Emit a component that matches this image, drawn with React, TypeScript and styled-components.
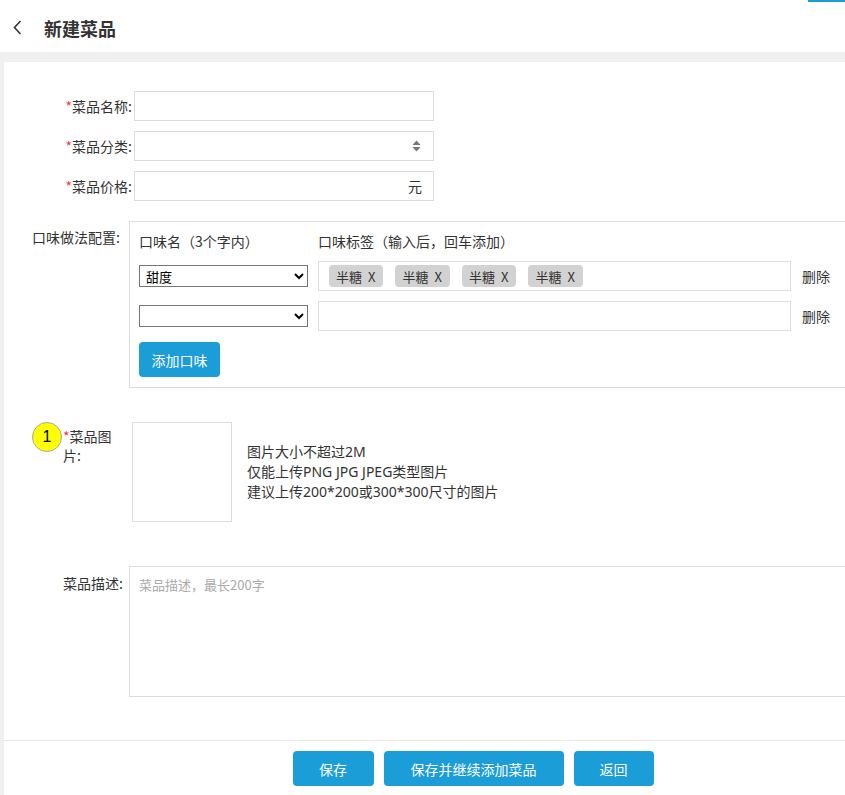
import React from "react";
import styled, { createGlobalStyle } from "styled-components";

const GlobalStyle = createGlobalStyle`
  html, body {
    margin: 0;
    padding: 0;
    background: #f0f0f0;
    overflow: hidden;
  }
  body {
    font-family: "Noto Sans", "Noto Sans CJK SC", sans-serif;
    color: #333;
    font-size: 14px;
  }
  * { box-sizing: border-box; }
`;

const Page = styled.div`
  width: 942px;
  min-height: 795px;
`;

const Header = styled.header`
  position: relative;
  height: 52px;
  background: #fff;
  display: flex;
  align-items: center;
  padding-left: 13px;
  padding-top: 3px;
`;

const TopAccent = styled.span`
  position: absolute;
  top: 0;
  left: 808px;
  width: 37px;
  height: 2px;
  background: #1b9dd8;
`;

const BackButton = styled.button`
  border: 0;
  background: none;
  padding: 0;
  margin-right: 22px;
  display: flex;
  align-items: center;
  cursor: pointer;
`;

const Title = styled.h1`
  margin: 0;
  font-size: 18px;
  font-weight: bold;
  color: #333;
  font-family: "Noto Sans CJK SC", sans-serif;
`;

const Main = styled.main`
  padding: 10px 0 0 4px;
`;

const Card = styled.div`
  width: 938px;
  background: #fff;
`;

const Form = styled.div`
  padding: 29px 0 43px;
`;

const Row = styled.div<{ $top?: number; $bottom?: number }>`
  display: flex;
  align-items: flex-start;
  margin-top: ${(p) => p.$top ?? 0}px;
  margin-bottom: ${(p) => p.$bottom ?? 0}px;
`;

const Label = styled.label<{ $width: number; $pt?: number; $lh?: number }>`
  width: ${(p) => p.$width}px;
  flex-shrink: 0;
  text-align: right;
  padding-top: ${(p) => p.$pt ?? 0}px;
  line-height: ${(p) => p.$lh ?? 30}px;
  font-size: 14px;
  color: #333;
  font-family: "Noto Sans CJK SC", sans-serif;
`;

const Star = styled.span`
  color: #f5364c;
`;

const FieldWrap = styled.div`
  position: relative;
  margin-left: 2px;
  width: 300px;
  height: 30px;
`;

const TextInput = styled.input`
  width: 100%;
  height: 100%;
  border: 1px solid #dcdcdc;
  padding: 0 10px;
  font-size: 14px;
  outline: none;
  appearance: none;
  background: #fff;
  font-family: inherit;
`;

const PlainSelect = styled.select`
  width: 100%;
  height: 100%;
  border: 1px solid #dcdcdc;
  border-radius: 0;
  padding: 0 10px;
  font-size: 14px;
  appearance: none;
  background: #fff;
  outline: none;
`;

const Suffix = styled.span`
  position: absolute;
  right: 12px;
  top: 0;
  line-height: 30px;
  font-size: 14px;
  color: #333;
  font-family: "Noto Sans CJK SC", sans-serif;
`;

const SortIcon = styled.svg`
  position: absolute;
  right: 13px;
  top: 9px;
  pointer-events: none;
`;

const FlavorBox = styled.div`
  margin-left: 9px;
  width: 800px;
  border: 1px solid #dcdcdc;
  padding: 9px 10px 10px 9px;
`;

const FlavorHead = styled.div`
  display: flex;
  line-height: 20px;
  font-size: 14px;
  font-family: "Noto Sans CJK SC", sans-serif;
`;

const HeadCell = styled.div<{ $width?: number }>`
  width: ${(p) => (p.$width ? `${p.$width}px` : "auto")};
  flex-shrink: 0;
`;

const FlavorRow = styled.div`
  display: flex;
  align-items: center;
  margin-top: 10px;
  height: 30px;
`;

const FlavorSelect = styled.select`
  width: 169px;
  height: 22px;
  border: 1px solid #767676;
  border-radius: 0;
  font-size: 13px;
  color: #000;
  background: #fff;
  padding: 0 2px;
  font-family: "Noto Sans CJK SC", sans-serif;
`;

const TagBox = styled.div`
  margin-left: 10px;
  width: 473px;
  height: 30px;
  border: 1px solid #dcdcdc;
  display: flex;
  align-items: center;
  padding-left: 10px;
  gap: 12px;
`;

const Tag = styled.span`
  display: inline-flex;
  align-items: center;
  height: 22px;
  padding: 0 8px 0 7px;
  border-radius: 4px;
  background: #d2d2d2;
  color: #333;
  font-size: 13px;
  font-family: "Noto Sans CJK SC", sans-serif;
  gap: 6px;
`;

const DeleteLink = styled.a`
  margin-left: 11px;
  font-size: 14px;
  color: #333;
  cursor: pointer;
  font-family: "Noto Sans CJK SC", sans-serif;
`;

const BlueButton = styled.button<{ $width: number }>`
  width: ${(p) => p.$width}px;
  height: 35px;
  border: 0;
  border-radius: 4px;
  background: #1b9dd8;
  color: #fff;
  font-size: 14px;
  font-family: "Noto Sans CJK SC", sans-serif;
  cursor: pointer;
`;

const AddButtonRow = styled.div`
  margin-top: 11px;
`;

const PicLabelCol = styled.div`
  width: 128px;
  flex-shrink: 0;
  display: flex;
  align-items: flex-start;
  padding-left: 28px;
`;

const Badge = styled.span`
  width: 30px;
  height: 30px;
  border-radius: 50%;
  background: #ffff00;
  border: 1px solid #a8a8a8;
  display: flex;
  align-items: center;
  justify-content: center;
  font-size: 16px;
  color: #000;
  font-family: "Liberation Sans", sans-serif;
  flex-shrink: 0;
`;

const PicLabel = styled.span`
  width: 50px;
  margin-left: 1px;
  padding-top: 5px;
  line-height: 19px;
  font-size: 14px;
  font-family: "Noto Sans CJK SC", sans-serif;
`;

const UploadBox = styled.div`
  width: 100px;
  height: 100px;
  border: 1px solid #dcdcdc;
  flex-shrink: 0;
  cursor: pointer;
`;

const Hints = styled.div`
  margin-left: 15px;
  padding-top: 20px;
  line-height: 20px;
  font-size: 14px;
  color: #333;
`;

const TextArea = styled.textarea`
  margin-left: 6px;
  width: 800px;
  height: 131px;
  border: 1px solid #dcdcdc;
  padding: 8px 9px;
  font-size: 13px;
  line-height: 20px;
  resize: none;
  outline: none;
  font-family: "Noto Sans CJK SC", sans-serif;
  &::placeholder {
    color: #aaa;
  }
`;

const Footer = styled.div`
  border-top: 1px solid #e8e8e8;
  padding: 10px 0 20px;
  display: flex;
  justify-content: center;
  gap: 10px;
`;

const tags = ["半糖", "半糖", "半糖", "半糖"];

export default function App() {
  return (
    <>
      <GlobalStyle />
      <Page>
        <Header>
          <TopAccent />
          <BackButton aria-label="返回">
            <svg width="9" height="15" viewBox="0 0 9 15">
              <polyline points="7.5,1 1.5,7.5 7.5,14" fill="none" stroke="#333" strokeWidth="1.6" />
            </svg>
          </BackButton>
          <Title>新建菜品</Title>
        </Header>
        <Main>
          <Card>
            <Form>
              <Row $bottom={10}>
                <Label $width={128}>
                  <Star>*</Star>菜品名称:
                </Label>
                <FieldWrap>
                  <TextInput />
                </FieldWrap>
              </Row>
              <Row $bottom={10}>
                <Label $width={128}>
                  <Star>*</Star>菜品分类:
                </Label>
                <FieldWrap>
                  <PlainSelect defaultValue="">
                    <option value=""></option>
                  </PlainSelect>
                  <SortIcon width="9" height="12" viewBox="0 0 9 12">
                    <polygon points="4.5,0.5 8.5,5 0.5,5" fill="#777" />
                    <polygon points="0.5,7 8.5,7 4.5,11.5" fill="#777" />
                  </SortIcon>
                </FieldWrap>
              </Row>
              <Row>
                <Label $width={128}>
                  <Star>*</Star>菜品价格:
                </Label>
                <FieldWrap>
                  <TextInput />
                  <Suffix>元</Suffix>
                </FieldWrap>
              </Row>

              <Row $top={20}>
                <Label $width={116} $pt={6} $lh={20}>
                  口味做法配置:
                </Label>
                <FlavorBox>
                  <FlavorHead>
                    <HeadCell $width={179}>口味名（3个字内）</HeadCell>
                    <HeadCell>口味标签（输入后，回车添加）</HeadCell>
                  </FlavorHead>
                  <FlavorRow>
                    <FlavorSelect defaultValue="甜度">
                      <option value="甜度">甜度</option>
                    </FlavorSelect>
                    <TagBox>
                      {tags.map((t, i) => (
                        <Tag key={i}>
                          {t}
                          <span>X</span>
                        </Tag>
                      ))}
                    </TagBox>
                    <DeleteLink>删除</DeleteLink>
                  </FlavorRow>
                  <FlavorRow>
                    <FlavorSelect defaultValue="">
                      <option value=""></option>
                    </FlavorSelect>
                    <TagBox />
                    <DeleteLink>删除</DeleteLink>
                  </FlavorRow>
                  <AddButtonRow>
                    <BlueButton $width={81}>添加口味</BlueButton>
                  </AddButtonRow>
                </FlavorBox>
              </Row>

              <Row $top={34}>
                <PicLabelCol>
                  <Badge>1</Badge>
                  <PicLabel>
                    <Star>*</Star>菜品图
                    <br />
                    片:
                  </PicLabel>
                </PicLabelCol>
                <UploadBox />
                <Hints>
                  <div>图片大小不超过2M</div>
                  <div>仅能上传PNG JPG JPEG类型图片</div>
                  <div>建议上传200*200或300*300尺寸的图片</div>
                </Hints>
              </Row>

              <Row $top={44}>
                <Label $width={119} $pt={7} $lh={20}>
                  菜品描述:
                </Label>
                <TextArea placeholder="菜品描述，最长200字" />
              </Row>
            </Form>
            <Footer>
              <BlueButton $width={81}>保存</BlueButton>
              <BlueButton $width={180}>保存并继续添加菜品</BlueButton>
              <BlueButton $width={80}>返回</BlueButton>
            </Footer>
          </Card>
        </Main>
      </Page>
    </>
  );
}
